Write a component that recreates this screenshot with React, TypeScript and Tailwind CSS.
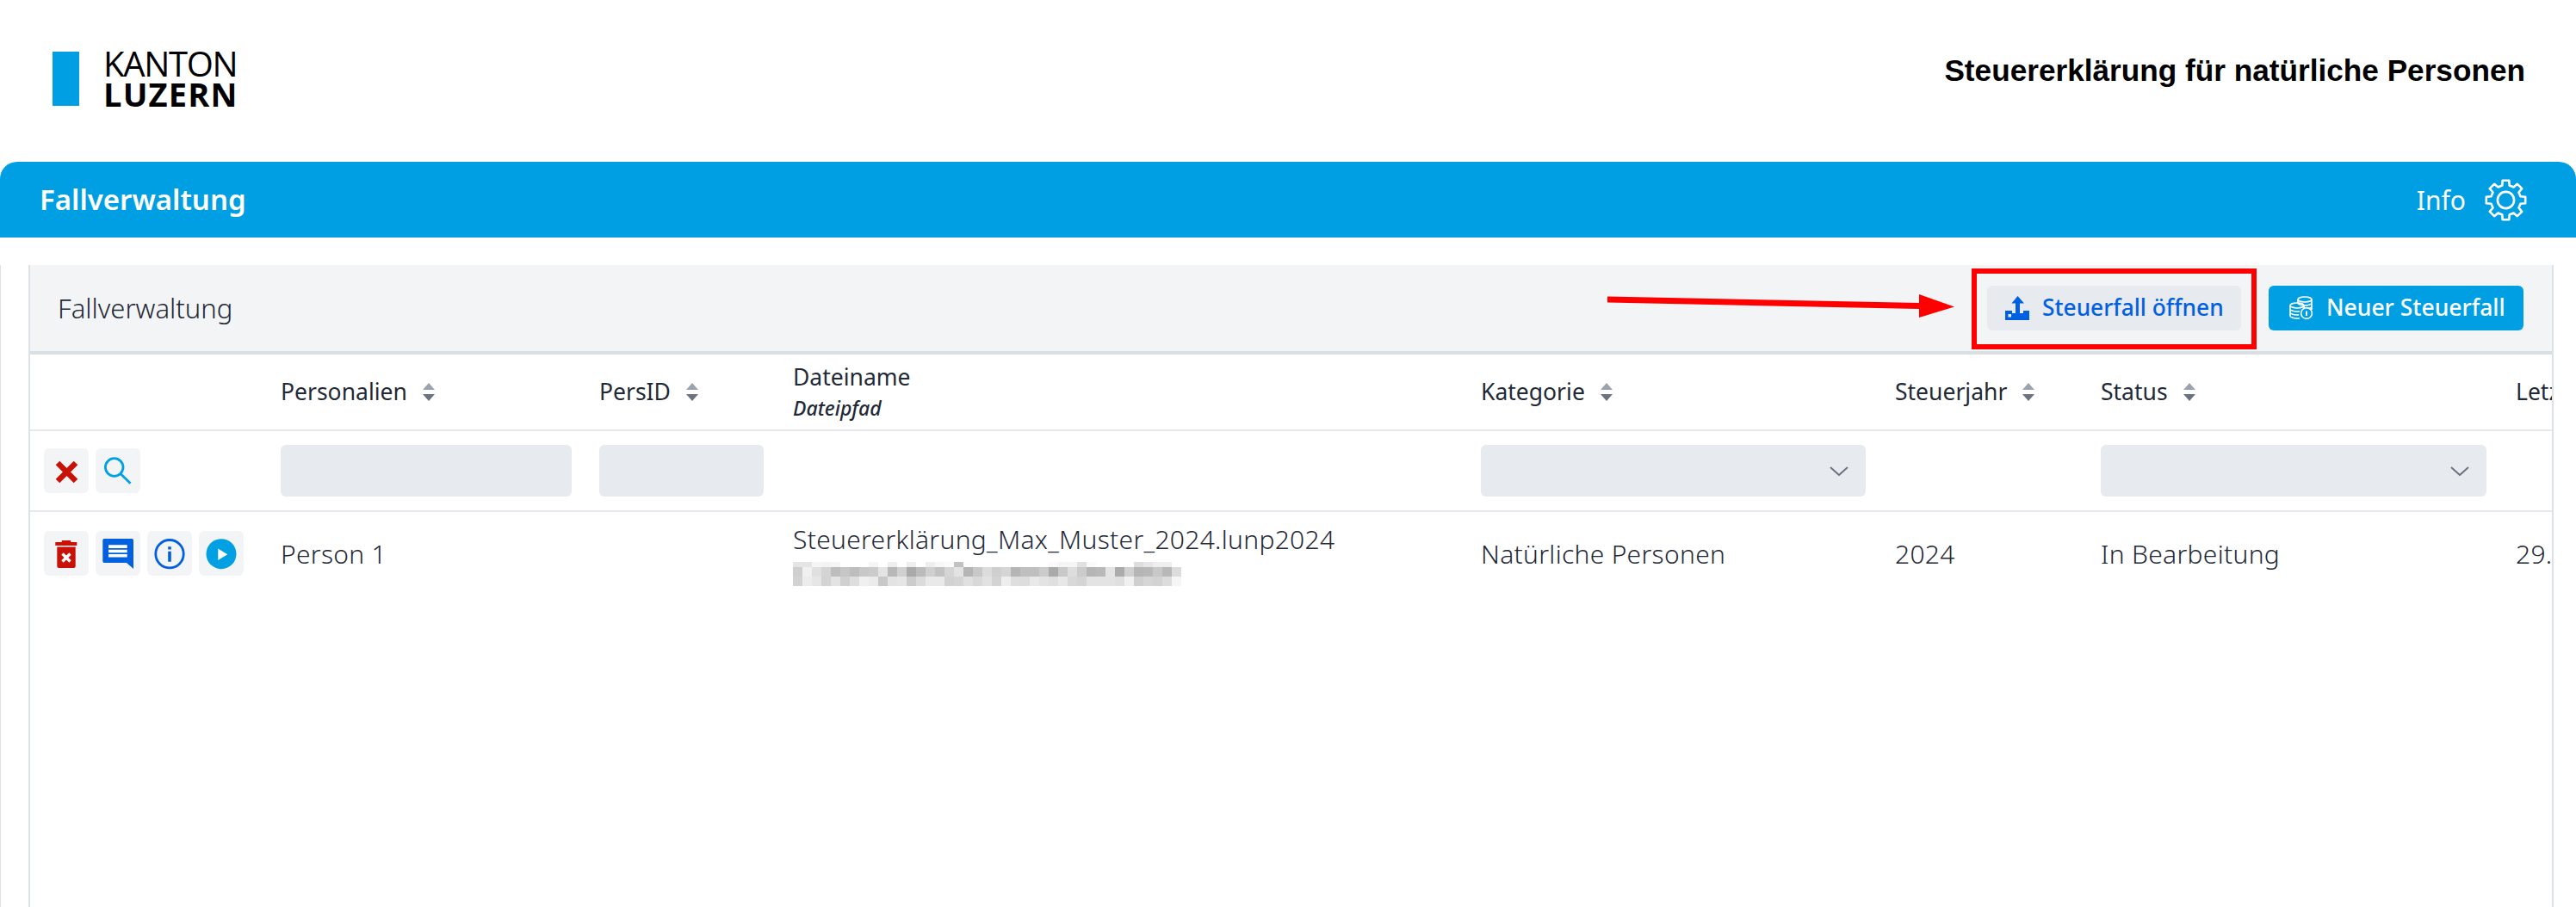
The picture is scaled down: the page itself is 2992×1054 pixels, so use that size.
const font = "font-['Noto_Sans',sans-serif]";

const gearPoints = (() => {
  const pts: string[] = [];
  const teeth = 8;
  for (let i = 0; i < teeth; i++) {
    const a = (i / teeth) * Math.PI * 2 - Math.PI / 2;
    const step = Math.PI / teeth;
    const p = (ang: number, r: number) =>
      `${(24.5 + Math.cos(ang) * r).toFixed(1)},${(24.5 + Math.sin(ang) * r).toFixed(1)}`;
    pts.push(p(a - step * 0.42, 23), p(a + step * 0.42, 23), p(a + step * 0.62, 17.5), p(a + step * 1.38, 17.5));
  }
  return pts.join(' ');
})();

function Gear() {
  return (
    <svg width="49" height="49" viewBox="0 0 49 49" fill="none" stroke="#fff" strokeWidth="2.6" strokeLinejoin="round">
      <polygon points={gearPoints} />
      <circle cx="24.5" cy="24.5" r="9.6" />
    </svg>
  );
}

function UploadIcon() {
  return (
    <svg width="28" height="28" viewBox="0 0 28 28" fill="#0060df">
      <path d="M14.5 0 22 8.5H17V20H12V8.5H7.5Z" />
      <path fillRule="evenodd" d="M0 17H8V20H21V17H28V28H0ZM3.5 21V24.5H7V21Z" />
    </svg>
  );
}

function CoinsIcon() {
  return (
    <svg width="28" height="28" viewBox="0 0 28 28" fill="none" stroke="#fff" strokeWidth="1.6">
      <ellipse cx="18" cy="4" rx="8" ry="3" />
      <path d="M10 4v4M26 4v12M10 8c0 1.600 3.500 3 8 3s8-1.400 8-3M26 12c0 1-1 2-3 2.400" />
      <ellipse cx="9" cy="11" rx="8" ry="3" />
      <path d="M1 11v12c0 1.600 3.500 3 8 3 1 0 2 0 3-.2M1 15c0 1.600 3.500 3 8 3 1 0 2 0 3-.2M1 19c0 1.600 3.500 3 8 3 .8 0 1.500 0 2.200-.1" />
      <path d="M17 11v3" />
      <circle cx="20" cy="20" r="6.400" />
      <path d="M20 17.500v5.500" strokeWidth="2" />
    </svg>
  );
}

function SortIcon() {
  return (
    <svg width="14" height="21" viewBox="0 0 14 21" className="ml-[18px] shrink-0">
      <path d="M7 0 14 8H0Z" fill="#9ca3af" />
      <path d="M0 13H14L7 21Z" fill="#6b7280" />
    </svg>
  );
}

function Chevron() {
  return (
    <svg width="22" height="11" viewBox="0 0 22 11" fill="none" stroke="#6b7280" strokeWidth="2">
      <path d="M1 1 11 10 21 1" />
    </svg>
  );
}

function IconButton({ children }: { children: React.ReactNode }) {
  return <div className="w-[52px] h-[52px] rounded-[6px] bg-[#f3f4f6] shrink-0">{children}</div>;
}

const ICON = { width: 52, height: 52, viewBox: '0 0 52 52' };

function ClearButton() {
  return (
    <IconButton>
      <svg {...ICON} fill="none" stroke="#c81208" strokeWidth="6.500">
        <path d="M16 17 37 38M37 17 16 38" />
      </svg>
    </IconButton>
  );
}

function SearchButton() {
  return (
    <IconButton>
      <svg {...ICON} fill="none" stroke="#00a0e3" strokeWidth="2.800">
        <circle cx="21.700" cy="22" r="10.300" />
        <path d="M29 29.500 40.500 40.800" />
      </svg>
    </IconButton>
  );
}

function DeleteButton() {
  return (
    <IconButton>
      <svg {...ICON}>
        <path d="M13.300 13H20.700V11.500Q20.700 11 21.500 11H30.500Q31.300 11 31.300 11.500V13H38.300V17H13.300Z" fill="#c81208" />
        <path d="M15.300 18.500H36.700V41Q36.700 43 34.700 43H17.300Q15.300 43 15.300 41Z" fill="#c81208" />
        <path d="M21.500 26.500 30.500 35.500M30.500 26.500 21.500 35.500" stroke="#fff" strokeWidth="3.400" />
      </svg>
    </IconButton>
  );
}

function CommentButton() {
  return (
    <IconButton>
      <svg {...ICON}>
        <path d="M10 9H42Q44 9 44 11V44L36 37H10Q8.300 37 8.300 35V11Q8.300 9 10 9Z" fill="#0060df" />
        <path d="M15 16.300H36.700V20H15ZM15 21.700H36.700V25.200H15ZM15 27H36.700V30.400H15Z" fill="#fff" />
      </svg>
    </IconButton>
  );
}

function InfoButton() {
  return (
    <IconButton>
      <svg {...ICON}>
        <circle cx="26" cy="26.700" r="16.200" fill="none" stroke="#0060df" strokeWidth="2.800" />
        <path d="M24.200 23.700H27.800V35.700H24.200ZM24.200 18.300H27.800V21.500H24.200Z" fill="#0060df" />
      </svg>
    </IconButton>
  );
}

function PlayButton() {
  return (
    <IconButton>
      <svg {...ICON}>
        <circle cx="26" cy="26.700" r="17.500" fill="#00a0e3" />
        <path d="M22.300 20.500 33.300 27.200 22.300 34Z" fill="#fff" />
      </svg>
    </IconButton>
  );
}

// censored file path: grey value of each block of the pixelated bar
const BLUR_ROWS = [
  'e5 e5 f5 f3 f5 ff ff ff f5 ff ee ff ee ff ee f7 fa c2 fd ff ff ff ff ff ff ff ff fa f5 f5 e0 fa ff ff ff ff dd e6 ee ee ff',
  'cf f0 e0 d4 bd c6 bd c8 cb e3 b8 d0 aa bb cf c2 d5 e3 b5 c8 dc cf d5 b5 bf bf cb aa c8 dd cb b5 b8 e3 ab d0 b5 b8 c8 b8 dc',
  'd2 ec e6 d3 e3 d0 de f0 eb c8 e3 e6 cc db e9 e9 d2 d5 e0 d8 e2 d3 ee de dd e9 e3 df e7 d8 d4 e3 e3 e3 df f0 cf d6 d2 dc f5',
];

function BlurredPath() {
  const heights = [6, 11, 11];
  const ys = [0, 6, 17];
  return (
    <svg width="451" height="28" viewBox="0 0 451 28" shapeRendering="crispEdges" className="mt-[8px] block">
      {BLUR_ROWS.map((row, r) =>
        row.split(' ').map((v, c) => (
          <rect key={`${r}-${c}`} x={c * 11} y={ys[r]} width={11} height={heights[r]} fill={`#${v}${v}${v}`} />
        )),
      )}
    </svg>
  );
}

function ArrowOverlay() {
  return (
    <svg width="420" height="40" viewBox="0 0 420 40" className="absolute left-[1832px] top-[26px] pointer-events-none" fill="#ff0000">
      <path d="M0 10.500 363 18V25L0 17.500Z" />
      <path d="M362 8 403 22.500 362 35Z" />
    </svg>
  );
}

const GRID = 'grid grid-cols-[275px_370px_225px_799px_481px_239px_482px_100px]';
const headText = 'text-[#1f2937] text-[26.5px] whitespace-nowrap';

function HeaderRow() {
  const cols = ['Personalien', 'PersID'];
  return (
    <div className={`${GRID} h-[89px] items-center border-b-2 border-[#e5e9ed]`}>
      <div />
      {cols.map((c) => (
        <div key={c} className={`flex items-center pl-4 ${headText}`}>
          {c}
          <SortIcon />
        </div>
      ))}
      <div className={`pl-4 ${headText} leading-[36px]`}>
        <div>Dateiname</div>
        <div className="text-[23px] leading-[36px] italic font-medium">Dateipfad</div>
      </div>
      {['Kategorie', 'Steuerjahr', 'Status'].map((c) => (
        <div key={c} className={`flex items-center pl-4 ${headText}`}>
          {c}
          <SortIcon />
        </div>
      ))}
      <div className={`pl-4 ${headText}`}>Letzte Änderung</div>
    </div>
  );
}

function FilterInput() {
  return <div className="h-[60px] rounded-[6px] bg-[#e7eaee]" />;
}

function FilterSelect() {
  return (
    <div className="h-[60px] rounded-[6px] bg-[#e7eaee] flex items-center justify-end pr-5">
      <Chevron />
    </div>
  );
}

function FilterRow() {
  return (
    <div className={`${GRID} h-[94px] items-center border-b-2 border-[#e5e9ed]`}>
      <div className="flex gap-2 pl-4">
        <ClearButton />
        <SearchButton />
      </div>
      <div className="px-4"><FilterInput /></div>
      <div className="pl-4 pr-[18px]"><FilterInput /></div>
      <div />
      <div className="pl-4 pr-[18px]"><FilterSelect /></div>
      <div />
      <div className="pl-4 pr-[18px]"><FilterSelect /></div>
      <div />
    </div>
  );
}

function DataRow() {
  const cell = 'pl-4 text-[#1f2937] text-[30px] tracking-[0.3px] font-light whitespace-nowrap';
  return (
    <div className={`${GRID} items-start pt-[22px]`}>
      <div className="flex gap-2 pl-4">
        <DeleteButton />
        <CommentButton />
        <InfoButton />
        <PlayButton />
      </div>
      <div className={`${cell} leading-[54px]`}>Person 1</div>
      <div />
      <div className={`${cell} leading-[36px] -mt-[8px]`}>
        Steuererklärung_Max_Muster_2024.lunp2024
        <BlurredPath />
      </div>
      <div className={`${cell} leading-[54px]`}>Natürliche Personen</div>
      <div className={`${cell} leading-[54px]`}>2024</div>
      <div className={`${cell} leading-[54px]`}>In Bearbeitung</div>
      <div className={`${cell} leading-[54px]`}>29.11.2024</div>
    </div>
  );
}

export default function App() {
  return (
    <div className={`w-[2992px] h-[1054px] overflow-hidden bg-white ${font}`}>
      <header className="h-[188px] flex items-center justify-between pl-[61px] pr-[59px]">
        <div className="flex items-center gap-[28px] pb-[5px]">
          <div className="w-[31px] h-[63px] bg-[#009fe3]" />
          <div className="font-['Open_Sans',sans-serif] text-black">
            <div className="text-[40px] leading-[36px] tracking-[-1.3px]">KANTON</div>
            <div className="text-[38px] leading-[35px] tracking-[1.2px] font-bold">LUZERN</div>
          </div>
        </div>
        <h1 className="font-['Liberation_Sans',sans-serif] text-[35.2px] font-bold text-black pb-[24px]">
          Steuererklärung für natürliche Personen
        </h1>
      </header>
      <div className="h-[88px] bg-[#009fe3] rounded-t-[20px] flex items-center justify-between pl-[46px] pr-[57px] text-white">
        <div className="text-[33px] font-semibold">Fallverwaltung</div>
        <div className="flex items-center gap-[22px] text-[30px]">
          Info
          <Gear />
        </div>
      </div>
      <div className="mt-8 h-[746px] border-l border-[#dde2e8]">
        <div className="ml-[32px] w-[2933px] h-full border-x-2 border-[#dde2e8]">
          <div className="relative h-[104px] bg-[#f3f4f6] border-b-4 border-[#dadfe4] flex items-center justify-between pl-[32px] pr-[33px]">
            <div className="text-[#1f2937] text-[31px] font-light">Fallverwaltung</div>
            <div className="flex items-center gap-[32px]">
              <div className="relative">
                <div className="flex items-center gap-[15px] w-[295px] h-[52px] pl-[21px] rounded-[6px] bg-[#e7eaee] text-[#0060df] text-[26.3px] font-medium">
                  <UploadIcon />
                  Steuerfall öffnen
                </div>
                <div className="absolute -left-[18px] -top-[20px] w-[331px] h-[94px] border-[6px] border-[#ff0000]" />
              </div>
              <div className="flex items-center gap-[15px] w-[296px] h-[52px] pl-[24px] rounded-[6px] bg-[#009fe3] text-white text-[26.5px] font-medium">
                <CoinsIcon />
                Neuer Steuerfall
              </div>
            </div>
            <ArrowOverlay />
          </div>
          <div className="overflow-hidden">
            <HeaderRow />
            <FilterRow />
            <DataRow />
          </div>
        </div>
      </div>
    </div>
  );
}
